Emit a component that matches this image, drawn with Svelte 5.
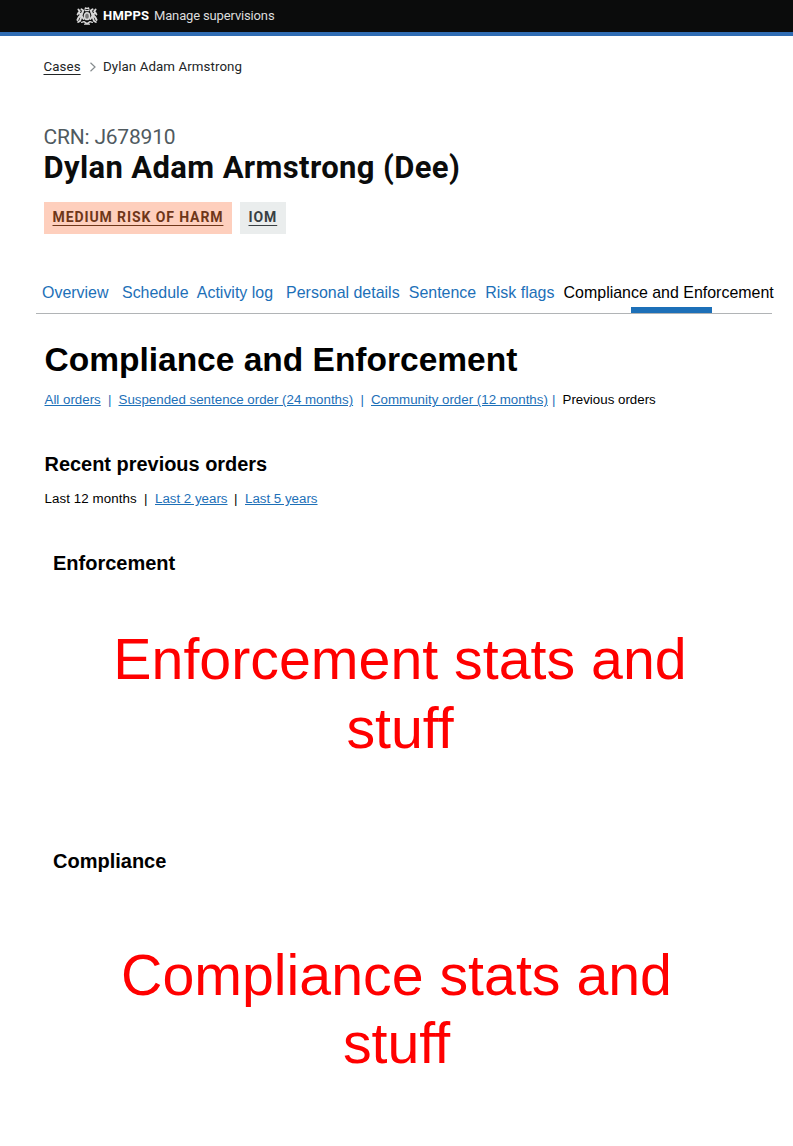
<script>
  const tabs = ['Overview', 'Schedule', 'Activity log', 'Personal details', 'Sentence', 'Risk flags'];
</script>

<div class="page">
  <header>
    <svg class="crest" viewBox="0 0 22 20" aria-hidden="true">
      <g fill="none" stroke="#d8d8d8" stroke-width="1.5" stroke-linecap="round" stroke-linejoin="round">
        <path d="M9 3.4L9.5 1.8L11 2.6L12.5 1.8L13 3.4M9 4.6H13" stroke-width="1.2" />
        <ellipse cx="11" cy="10.2" rx="2.6" ry="3.4" fill="#777" />
        <path d="M5.4 3.2L7.2 4.5L6.5 7L4.4 8.2L2.6 6.6L1.6 8.4M6.4 6L5.6 10L7.6 13M4.4 9.5L2.6 11.5L1.4 14M5.4 11L4 15L2.2 16M2.4 3.5L3.8 5.4" stroke-width="1.9" />
        <path d="M16.6 3.2L14.8 4.5L15.5 7L17.6 8.2L19.4 6.6L20.4 8.4M15.6 6L16.4 10L14.4 13M17.6 9.5L19.4 11.5L20.6 14M16.6 11L18 15L19.8 16M19.6 3.5L18.2 5.4" stroke-width="1.9" />
        <path d="M5.6 16.4L8 15.6L11 17.6L14 15.6L16.4 16.4M8.6 18.2H13.4" stroke-width="1.3" />
      </g>
    </svg>
    <span class="org">HMPPS</span>
    <span class="service">Manage supervisions</span>
  </header>

  <nav class="crumbs" aria-label="Breadcrumb">
    <a href="#cases">Cases</a>
    <svg viewBox="0 0 8 10" aria-hidden="true"><path d="M1.5 .8L6 5L1.5 9.2" fill="none" stroke="#858b8e" stroke-width="1.2" /></svg>
    <span>Dylan Adam Armstrong</span>
  </nav>

  <section class="person">
    <div class="crn">CRN: J678910</div>
    <div class="name">Dylan Adam Armstrong (Dee)</div>
    <div class="tags">
      <a class="tag risk" href="#risk"><span>MEDIUM RISK OF HARM</span></a>
      <a class="tag iom" href="#iom"><span>IOM</span></a>
    </div>
  </section>

  <nav class="tabs" aria-label="Case">
    {#each tabs as tab}
      <a href="#tab">{tab}</a>
    {/each}
    <span class="current">Compliance and Enforcement</span>
  </nav>

  <main>
    <h1>Compliance and Enforcement</h1>
    <div class="links orders">
      <a href="#all">All orders</a><i>|</i>
      <a href="#suspended">Suspended sentence order (24 months)</a><i>|</i>
      <a href="#community">Community order (12 months)</a><i>|</i>
      <span>Previous orders</span>
    </div>
    <h2>Recent previous orders</h2>
    <div class="links periods">
      <span class="period">Last 12 months</span><b>|</b>
      <a href="#two">Last 2 years</a><b>|</b>
      <a href="#five">Last 5 years</a>
    </div>
    <section class="block">
      <h3>Enforcement</h3>
      <p class="enforcement">Enforcement stats and<br />stuff</p>
    </section>
    <section class="block">
      <h3>Compliance</h3>
      <p class="compliance">Compliance stats and<br />stuff</p>
    </section>
  </main>
</div>

<style>
  :global(body) { margin: 0; background: #fff; }
  .page {
    width: 793px;
    height: 1146px;
    overflow: hidden;
    background: #fff;
    color: #000;
    font-family: "Liberation Sans", Arial, sans-serif;
    white-space: nowrap;
  }
  header {
    box-sizing: border-box;
    height: 36px;
    padding: 0 0 0 76px;
    border-bottom: 4px solid #2f6cb3;
    background: #0b0c0c;
    display: flex;
    align-items: center;
    color: #fff;
    font: 13px/32px Roboto, sans-serif;
  }
  .crest { width: 22px; height: 20px; flex: none; }
  .org { margin-left: 5px; width: 51px; font-weight: 700; letter-spacing: .2px; }
  .service { color: #dcdcdc; letter-spacing: -.15px; }

  .crumbs {
    display: grid;
    grid-template-columns: 45px 14.5px auto;
    align-items: center;
    padding: 22px 0 0 43.5px;
    height: 18px;
    font: 13.3px/18px Roboto, sans-serif;
    letter-spacing: .09px;
    color: #222526;
  }
  .crumbs a { color: inherit; justify-self: start; text-underline-offset: 3px; }
  .crumbs svg { width: 8px; height: 10px; }

  .person {
    padding: 48px 0 0 43.5px;
    height: 150px;
    box-sizing: border-box;
    font-family: Roboto, sans-serif;
  }
  .crn { font-size: 21px; line-height: 26px; color: #505a5f; letter-spacing: -.2px; }
  .name { font-size: 31px; line-height: 36px; font-weight: 700; color: #0b0c0c; letter-spacing: .37px; }
  .tags { display: flex; gap: 8px; margin-top: 16px; }
  .tag {
    box-sizing: border-box;
    height: 32px;
    padding-left: 9px;
    font-size: 14px;
    line-height: 30px;
    font-weight: 700;
    letter-spacing: .9px;
    text-underline-offset: 3px;
  }
  .risk { width: 188px; background: #fecfbd; color: #6e3619; }
  .iom { width: 46px; background: #eaeded; color: #383f43; }

  .tabs {
    display: grid;
    grid-template-columns: 80px 74.8px 89.3px 122.7px 76.5px 78.3px auto;
    width: 736px;
    height: 38px;
    margin: 50px 0 0 36px;
    padding: 8px 0 0 6px;
    box-sizing: border-box;
    background: linear-gradient(#1d70b8, #1d70b8) 595px 31px / 81px 7px no-repeat;
    border-bottom: 1px solid #b1b4b6;
    font-size: 15.96px;
    line-height: 18px;
  }
  .tabs a { color: #1d70b8; text-decoration: none; }

  main { padding: 26px 0 0 44.5px; }
  h1, h2, h3, p { margin: 0; }
  h1 { font-size: 33.5px; line-height: 40px; }
  .links { display: grid; font-size: 13.32px; line-height: 16px; }
  .links a { color: #1d70b8; text-underline-offset: 1px; justify-self: start; }
  .links i { color: #1d70b8; font-style: normal; }
  .links b { font-weight: 400; }
  .orders { margin-top: 12px; grid-template-columns: 63.5px 10.5px 242px 10.5px 181px 10.5px auto; }
  h2 { margin-top: 44px; font-size: 19.95px; line-height: 24px; }
  .periods { margin-top: 15px; grid-template-columns: 99.5px 11px 79px 11px auto; }
  .period { letter-spacing: .08px; }
  .block { height: 298px; margin-left: 8.5px; }
  .periods + .block { margin-top: 44px; }
  h3 { font-size: 20px; line-height: 24px; }
  p { width: 694px; text-align: center; color: #f00; font-size: 57.3px; line-height: 68.5px; font-variant-ligatures: none; }
  .enforcement { margin-top: 50px; }
  .compliance { margin-top: 67.5px; width: 687px; }
</style>
